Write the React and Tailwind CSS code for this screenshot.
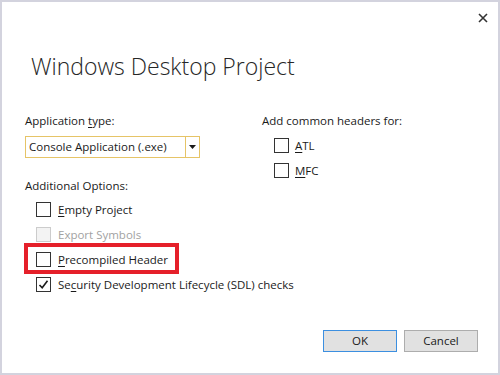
import React from 'react';

const font = { fontFamily: '"Open Sans", "Liberation Sans", sans-serif' };

const Check = ({ checked, disabled }) => (
  <span
    className={
      'w-[15px] h-[15px] shrink-0 border flex items-center justify-center ' +
      (disabled ? 'border-[#cccccc] bg-[#f3f3f3]' : 'border-[#333333] bg-white')
    }
  >
    {checked && (
      <svg width="11" height="11" viewBox="0 0 11 11">
        <path d="M1.5 6 L4.2 8.8 L9.5 1.8" fill="none" stroke="#1a1a1a" strokeWidth="1.6" />
      </svg>
    )}
  </span>
);

const Option = ({ children, checked, disabled, boxed }) => (
  <div className="relative flex items-center h-[15px] gap-[7px] whitespace-nowrap">
    {boxed && (
      <span className="absolute left-[-12px] top-[-9px] w-[155px] h-[31px] border-4 border-[#e5202a]" />
    )}
    <Check checked={checked} disabled={disabled} />
    <span className={disabled ? 'text-[#a2a2a2]' : 'text-[#1a1a1a]'}>{children}</span>
  </div>
);

const U = ({ children }) => <span className="underline underline-offset-2">{children}</span>;

export default function App() {
  return (
    <div
      style={font}
      className="w-[500px] h-[375px] bg-white border-2 border-[#d3d3de] flex flex-col text-[11.5px] leading-[16px] text-[#1a1a1a] overflow-hidden"
    >
      <div className="flex justify-end pt-[11px] pr-[10px]">
        <svg width="10" height="10" viewBox="0 0 10 10">
          <path d="M1 1 L9 9 M9 1 L1 9" stroke="#333333" strokeWidth="1.6" />
        </svg>
      </div>

      <h1 className="mt-[27px] ml-[29px] text-[23px] leading-[32px] font-light text-[#262626]">
        Windows Desktop Project
      </h1>

      <div className="flex mt-[31px] ml-[23px]">
        <div className="w-[237px] flex flex-col">
          <div>
            Application <U>t</U>ype:
          </div>
          <div className="mt-[7px] flex w-[175px] h-[22px] border border-[#e6c467]">
            <div className="flex-1 flex items-center pl-[3px] border-r border-[#e6c467]">
              Console Application (.exe)
            </div>
            <div className="w-[13px] flex items-center justify-center">
              <svg width="7" height="4" viewBox="0 0 7 4">
                <path d="M0 0 L7 0 L3.5 4 Z" fill="#1a1a1a" />
              </svg>
            </div>
          </div>

          <div className="mt-[20px]">Additional Options:</div>

          <div className="mt-[8px] ml-[11px] flex flex-col gap-[10px]">
            <Option>
              <U>E</U>mpty Project
            </Option>
            <Option disabled>Export Symbols</Option>
            <Option boxed>
              <U>P</U>recompiled Header
            </Option>
            <Option checked>
              Se<U>c</U>urity Development Lifecycle (SDL) checks
            </Option>
          </div>
        </div>

        <div className="flex flex-col">
          <div>Add common headers for:</div>
          <div className="mt-[9px] ml-[12px] flex flex-col gap-[10px]">
            <div className="flex items-center h-[15px] gap-[6px]">
              <Check />
              <span>
                <U>A</U>TL
              </span>
            </div>
            <div className="flex items-center h-[15px] gap-[6px]">
              <Check />
              <span>
                <U>M</U>FC
              </span>
            </div>
          </div>
        </div>
      </div>

      <div className="mt-auto mb-[21px] mr-[20px] flex justify-end gap-[7px]">
        <button className="w-[74px] h-[22px] bg-[#e1e1e1] border border-[#3c8fe0] text-[#1a1a1a]">
          OK
        </button>
        <button className="w-[74px] h-[22px] bg-[#e1e1e1] border border-[#adadad] text-[#1a1a1a]">
          Cancel
        </button>
      </div>
    </div>
  );
}
